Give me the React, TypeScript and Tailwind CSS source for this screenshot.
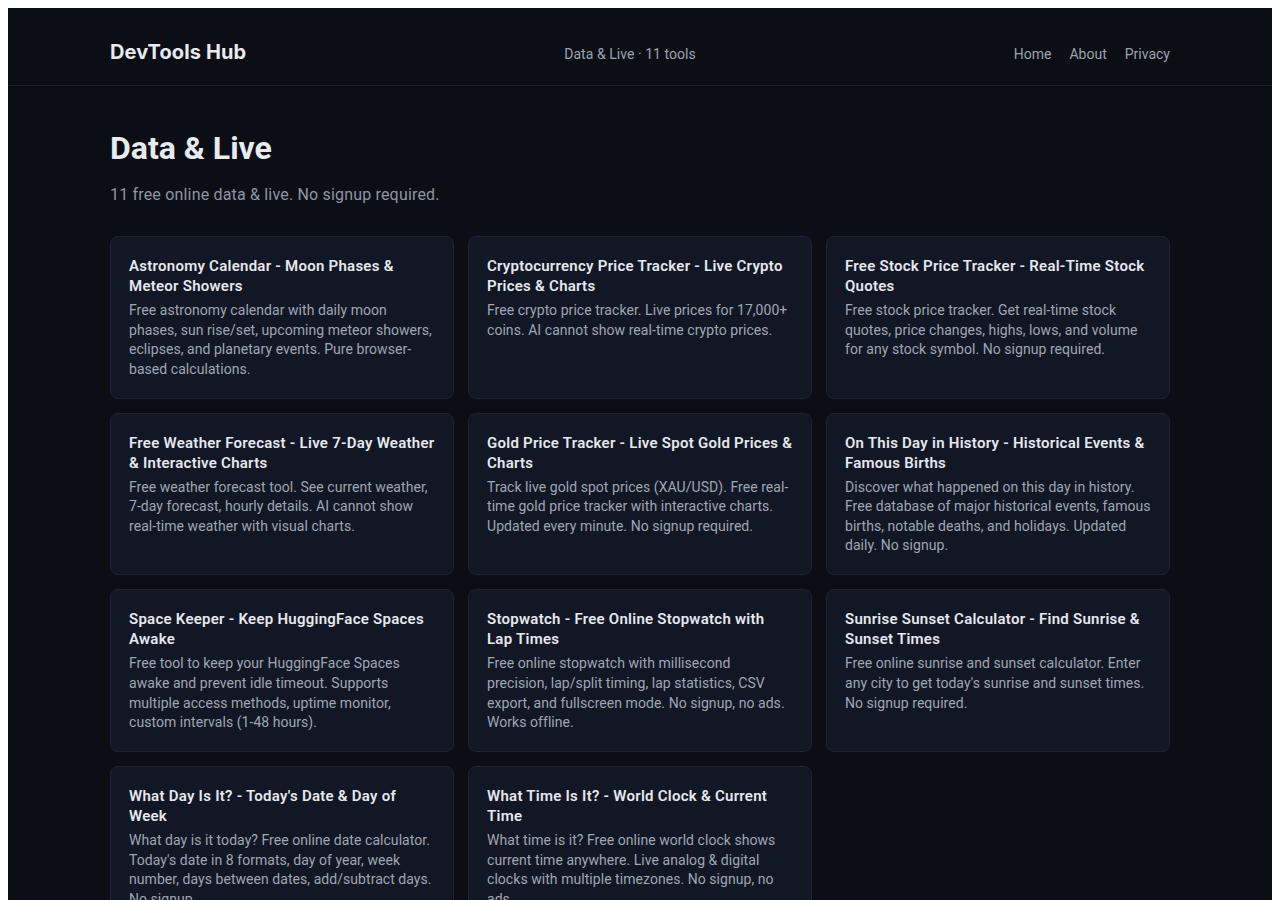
import React from "react";

type Tool = { title: string; desc: string };

const tools: Tool[] = [
  {
    title: "Astronomy Calendar - Moon Phases & Meteor Showers",
    desc: "Free astronomy calendar with daily moon phases, sun rise/set, upcoming meteor showers, eclipses, and planetary events. Pure browser-based calculations.",
  },
  {
    title: "Cryptocurrency Price Tracker - Live Crypto Prices & Charts",
    desc: "Free crypto price tracker. Live prices for 17,000+ coins. AI cannot show real-time crypto prices.",
  },
  {
    title: "Free Stock Price Tracker - Real-Time Stock Quotes",
    desc: "Free stock price tracker. Get real-time stock quotes, price changes, highs, lows, and volume for any stock symbol. No signup required.",
  },
  {
    title: "Free Weather Forecast - Live 7-Day Weather & Interactive Charts",
    desc: "Free weather forecast tool. See current weather, 7-day forecast, hourly details. AI cannot show real-time weather with visual charts.",
  },
  {
    title: "Gold Price Tracker - Live Spot Gold Prices & Charts",
    desc: "Track live gold spot prices (XAU/USD). Free real-time gold price tracker with interactive charts. Updated every minute. No signup required.",
  },
  {
    title: "On This Day in History - Historical Events & Famous Births",
    desc: "Discover what happened on this day in history. Free database of major historical events, famous births, notable deaths, and holidays. Updated daily. No signup.",
  },
  {
    title: "Space Keeper - Keep HuggingFace Spaces Awake",
    desc: "Free tool to keep your HuggingFace Spaces awake and prevent idle timeout. Supports multiple access methods, uptime monitor, custom intervals (1-48 hours).",
  },
  {
    title: "Stopwatch - Free Online Stopwatch with Lap Times",
    desc: "Free online stopwatch with millisecond precision, lap/split timing, lap statistics, CSV export, and fullscreen mode. No signup, no ads. Works offline.",
  },
  {
    title: "Sunrise Sunset Calculator - Find Sunrise & Sunset Times",
    desc: "Free online sunrise and sunset calculator. Enter any city to get today's sunrise and sunset times. No signup required.",
  },
  {
    title: "What Day Is It? - Today's Date & Day of Week",
    desc: "What day is it today? Free online date calculator. Today's date in 8 formats, day of year, week number, days between dates, add/subtract days. No signup.",
  },
  {
    title: "What Time Is It? - World Clock & Current Time",
    desc: "What time is it? Free online world clock shows current time anywhere. Live analog & digital clocks with multiple timezones. No signup, no ads.",
  },
];

function ToolCard({ tool }: { tool: Tool }) {
  return (
    <a
      href="#"
      className="block rounded-lg border border-[#1e2433] bg-[#121725] px-[18px] pt-[19px] pb-[18.3px] hover:border-[#2c3447]"
    >
      <h2 className="text-[15px] font-semibold leading-5 tracking-[0.26px] text-[#e6e8ee]">
        {tool.title}
      </h2>
      <p className="mt-[5px] text-[14px] leading-[1.4] tracking-[0.05px] text-[#a0a6b3]">
        {tool.desc}
      </p>
    </a>
  );
}

export default function App() {
  return (
    <div className="bg-white p-2 font-['Roboto',_'Open_Sans',_sans-serif]">
      <div className="min-h-[900px] bg-[#0b0e15]">
        <header className="border-b border-[#1c2130] pt-[30px] pb-[19px]">
          <div className="mx-auto flex max-w-[1060px] items-baseline justify-between">
            <a
              href="#"
              className="font-['Inter',_sans-serif] text-[20px] font-bold leading-7 tracking-[0.1px] text-[#e8eaef]"
            >
              DevTools Hub
            </a>
            <span className="text-[14px] leading-5 tracking-[0.05px] text-[#9ca3af]">
              Data &amp; Live · 11 tools
            </span>
            <nav className="flex items-baseline gap-[18px] text-[14px] leading-5 text-[#9ca3af]">
              <a href="#">Home</a>
              <a href="#">About</a>
              <a href="#">Privacy</a>
            </nav>
          </div>
        </header>

        <main className="mx-auto max-w-[1060px] pt-[42px] pb-12">
          <h1 className="text-[32px] font-bold leading-10 text-[#e8eaef]">Data &amp; Live</h1>
          <p className="mt-[15px] text-[16px] leading-6 tracking-[0.18px] text-[#8f96a3]">
            11 free online data &amp; live. No signup required.
          </p>
          <div className="mt-[29px] grid grid-cols-3 gap-[14px]">
            {tools.map((t) => (
              <ToolCard key={t.title} tool={t} />
            ))}
          </div>
        </main>
      </div>
    </div>
  );
}
